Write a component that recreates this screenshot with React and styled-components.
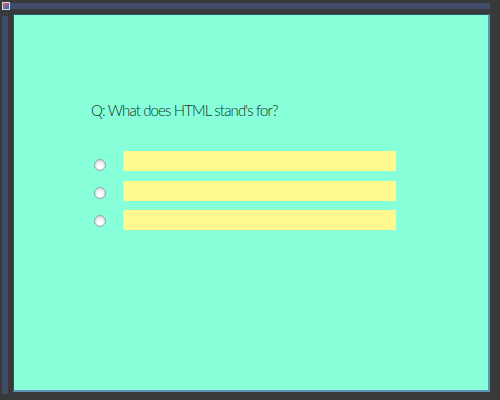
import styled, { createGlobalStyle } from "styled-components";

const GlobalStyle = createGlobalStyle`
  html, body {
    margin: 0;
    padding: 0;
    background: #38393b;
  }
`;

const Frame = styled.div`
  width: 500px;
  height: 400px;
  box-sizing: border-box;
  padding: 2px 10px 8px 2px;
  display: flex;
  flex-direction: column;
  gap: 4px;
  background: #38393b;
  overflow: hidden;
`;

const TitleBar = styled.div`
  height: 8px;
  display: flex;
`;

const AppIcon = styled.div`
  width: 6px;
  height: 6px;
  border: 1px solid #d5d8dc;
  background: linear-gradient(135deg, #b9636a 0 45%, #4a6fb5 55%);
`;

const TitleStrip = styled.div`
  flex: 1;
  margin-top: 1px;
  height: 6px;
  background: #414c69;
`;

const Body = styled.div`
  flex: 1;
  display: flex;
  gap: 3px;
  min-height: 0;
`;

const SideStrip = styled.div`
  width: 6px;
  margin-top: 2px;
  margin-bottom: -2px;
  background: #414c69;
`;

const Panel = styled.main`
  flex: 1;
  margin-left: 2px;
  box-sizing: border-box;
  border-style: solid;
  border-color: #33506c #5b94b8 #5b94b8 #33506c;
  border-width: 1px 2px 2px 1px;
  background: #87ffd8;
  padding: 84px 0 0 77px;
`;

const Question = styled.h1`
  margin: 0 0 30px;
  font: 300 15px/22px "Lato", sans-serif;
  letter-spacing: -0.86px;
  color: #12322c;
`;

const Answers = styled.div`
  display: flex;
  align-items: flex-start;
  gap: 17px;
`;

const RadioColumn = styled.div`
  display: flex;
  flex-direction: column;
  gap: 16px;
  padding: 8px 0 0 3px;
`;

const Radio = styled.span`
  display: block;
  width: 10px;
  height: 10px;
  border-radius: 50%;
  border: 1px solid #94a5a8;
  background: radial-gradient(circle at 50% 65%, #ffffff 20%, #cfd5de 90%);
`;

const FieldColumn = styled.div`
  display: flex;
  flex-direction: column;
  gap: 9.5px;
`;

const AnswerField = styled.div`
  width: 273px;
  height: 20px;
  background: #fff98f;
`;

export default function App() {
  const answers = [1, 2, 3];
  return (
    <>
      <GlobalStyle />
      <Frame>
        <TitleBar>
          <AppIcon />
          <TitleStrip />
        </TitleBar>
        <Body>
          <SideStrip />
          <Panel>
            <Question>Q: What does HTML stand's for?</Question>
            <Answers>
              <RadioColumn>
                {answers.map((id) => (
                  <Radio key={id} />
                ))}
              </RadioColumn>
              <FieldColumn>
                {answers.map((id) => (
                  <AnswerField key={id} />
                ))}
              </FieldColumn>
            </Answers>
          </Panel>
        </Body>
      </Frame>
    </>
  );
}
